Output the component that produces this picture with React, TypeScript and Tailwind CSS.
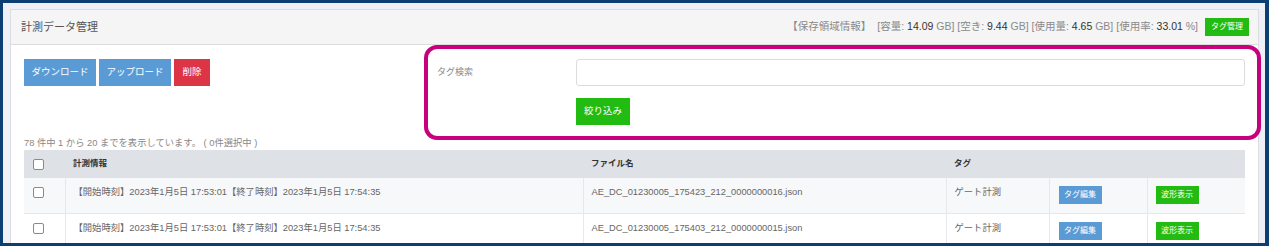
const font = { fontFamily: '"Liberation Sans", "Noto Sans CJK JP", sans-serif' };

interface Row {
    start: string;
    end: string;
    file: string;
    tag: string;
}

const rows: Row[] = [
    { start: '2023年1月5日 17:53:01', end: '2023年1月5日 17:54:35', file: 'AE_DC_01230005_175423_212_0000000016.json', tag: 'ゲート計測' },
    { start: '2023年1月5日 17:53:01', end: '2023年1月5日 17:54:35', file: 'AE_DC_01230005_175403_212_0000000015.json', tag: 'ゲート計測' },
];

const Check = () => (
    <span className="inline-block w-[11px] h-[11px] border border-[#8a8a8a] rounded-[2px] bg-white align-middle" />
);

const StorageInfo = () => (
    <div className="text-[10.5px] text-[#8a8a8a] flex items-center gap-[6px]">
        <span>【保存領域情報】</span>
        <span>[容量: <span className="text-[#333]">14.09</span> GB]</span>
        <span className="-ml-[3px]">[空き: <span className="text-[#333]">9.44</span> GB]</span>
        <span className="-ml-[3px]">[使用量: <span className="text-[#333]">4.65</span> GB]</span>
        <span className="-ml-[3px]">[使用率: <span className="text-[#333]">33.01</span> %]</span>
        <button className="ml-[1px] h-[18px] w-[44px] bg-[#22bb11] text-white text-[8px]">タグ管理</button>
    </div>
);

export default function App() {
    return (
        <div className="w-[1269px] h-[246px] bg-[#0b3f74] pt-[3px] pl-[3px] pr-[4px] pb-[3px] overflow-hidden" style={font}>
            <div className="relative h-full bg-[#eef0f7] pt-[6px] pl-[7px] pr-[6px] overflow-hidden">
                <div className="bg-white border border-[#dddddd] h-[260px]">
                    {/* header */}
                    <div className="h-[35px] bg-[#f5f5f5] border-b border-[#dddddd] flex items-center justify-between pl-[10px] pr-[9px]">
                        <span className="text-[11px] text-[#555]">計測データ管理</span>
                        <StorageInfo />
                    </div>

                    {/* body */}
                    <div className="px-[13px] pt-[14px]">
                        <div className="flex">
                            <div className="w-[400px] flex gap-[3px] items-start">
                                <button className="h-[27px] w-[72px] bg-[#5b9bd5] text-white text-[9.5px]">ダウンロード</button>
                                <button className="h-[27px] w-[72px] bg-[#5b9bd5] text-white text-[9.5px]">アップロード</button>
                                <button className="h-[27px] w-[36px] bg-[#dc3545] text-white text-[9.5px]">削除</button>
                            </div>
                            <div className="flex-1 pl-[13px]">
                                <div className="flex items-center">
                                    <span className="w-[139px] text-[9px] text-[#888]">タグ検索</span>
                                    <input className="flex-1 h-[27px] border border-[#dcdcdc] rounded-[3px] bg-white outline-none" />
                                </div>
                                <div className="pl-[139px] mt-[11px]">
                                    <button className="h-[27px] w-[54px] bg-[#22bb11] text-white text-[9.5px]">絞り込み</button>
                                </div>
                            </div>
                        </div>

                        <div className="mt-[12px] text-[9.3px] text-[#888] leading-[12px]">
                            78 件中 1 から 20 までを表示しています。 ( 0件選択中 )
                        </div>

                        <table className="mt-[1px] w-full table-fixed border-collapse text-[9.3px] text-[#666]">
                            <colgroup>
                                <col className="w-[41px]" />
                                <col className="w-[518px]" />
                                <col className="w-[363px]" />
                                <col className="w-[103px]" />
                                <col className="w-[98px]" />
                                <col />
                            </colgroup>
                            <thead>
                                <tr className="h-[28px] bg-[#dee1e5] text-[8.5px] text-[#333] font-bold text-left">
                                    <th className="pl-[9px]"><Check /></th>
                                    <th className="pl-[8px]">計測情報</th>
                                    <th className="pl-[8px]">ファイル名</th>
                                    <th className="pl-[8px]">タグ</th>
                                    <th></th>
                                    <th></th>
                                </tr>
                            </thead>
                            <tbody>
                                {rows.map((r, i) => (
                                    <tr key={i} className={`h-[36px] border-b border-[#e6e8eb] ${i % 2 === 0 ? 'bg-[#f7f8fa]' : 'bg-white'}`}>
                                        <td className="pl-[9px] pt-[3px] align-top"><span className="block mt-[5px]"><Check /></span></td>
                                        <td className="border-l border-[#e6e8eb] pl-[8px] pt-[8px] align-top">【開始時刻】{r.start}【終了時刻】{r.end}</td>
                                        <td className="border-l border-[#e6e8eb] pl-[8px] pt-[8px] align-top">{r.file}</td>
                                        <td className="border-l border-[#e6e8eb] pl-[8px] pt-[8px] align-top">{r.tag}</td>
                                        <td className="border-l border-[#e6e8eb] pl-[9px] pt-[8px] align-top">
                                            <button className="h-[18px] w-[43px] bg-[#5b9bd5] text-white text-[8px]">タグ編集</button>
                                        </td>
                                        <td className="border-l border-[#e6e8eb] pl-[8px] pt-[8px] align-top">
                                            <button className="h-[18px] w-[43px] bg-[#22bb11] text-white text-[8px]">波形表示</button>
                                        </td>
                                    </tr>
                                ))}
                            </tbody>
                        </table>
                    </div>
                </div>

                {/* annotation highlight */}
                <div className="absolute left-[421px] top-[42px] w-[837px] h-[95px] border-[4px] border-[#c7007d] rounded-[13px] pointer-events-none" />
            </div>
        </div>
    );
}
